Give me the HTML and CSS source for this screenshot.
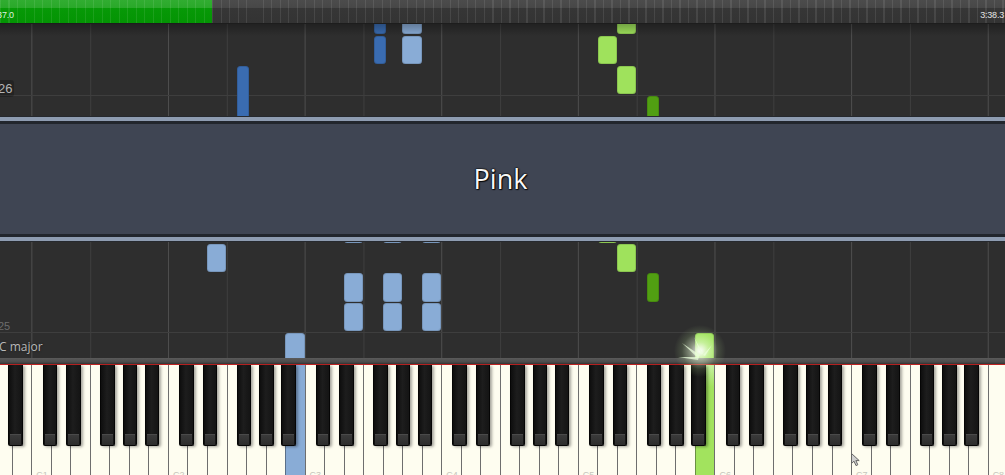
FILE: index.html
```html
<!DOCTYPE html>
<html>
<head>
<meta charset="utf-8">
<title>Pink</title>
<link rel="stylesheet" href="styles.css">
</head>
<body>
<div class="topbar">
  <div class="progress"><span class="time time-left">3:37.0</span></div>
  <div class="rest"><span class="time time-right">3:38.3</span></div>
</div>

<div class="roll">
  <div class="mline m1"></div>
  <div class="mline m2"></div>
  <span class="mlabel l26">26</span>
  <span class="mlabel l25">25</span>
  <span class="keylabel">C major</span>

  <div class="n dkb" style="left:237.4px;top:42px;height:60px"></div>
  <div class="n dkb" style="left:374px;top:-12px;height:21.5px"></div>
  <div class="n dkb" style="left:374px;top:12px;height:28px"></div>
  <div class="n ltb" style="left:402.3px;top:-12px;height:21.5px"></div>
  <div class="n ltb" style="left:402.3px;top:12px;height:28px"></div>
  <div class="n grn" style="left:617px;top:-12px;height:21.5px"></div>
  <div class="n grn" style="left:597.5px;top:12px;height:28px"></div>
  <div class="n grn" style="left:617px;top:42px;height:28px"></div>
  <div class="n dkg" style="left:647.2px;top:72px;height:40px"></div>

  <div class="n ltb" style="left:207px;top:220px;height:28.3px"></div>
  <div class="n ltb" style="left:343.7px;top:160px;height:58.7px"></div>
  <div class="n ltb" style="left:382.7px;top:160px;height:58.7px"></div>
  <div class="n ltb" style="left:421.8px;top:160px;height:58.7px"></div>
  <div class="n grn" style="left:597.5px;top:160px;height:58.7px"></div>
  <div class="n ltb" style="left:343.7px;top:249.3px;height:28.4px"></div>
  <div class="n ltb" style="left:343.7px;top:278.7px;height:28.3px"></div>
  <div class="n ltb" style="left:382.7px;top:249.3px;height:28.4px"></div>
  <div class="n ltb" style="left:382.7px;top:278.7px;height:28.3px"></div>
  <div class="n ltb" style="left:421.8px;top:249.3px;height:28.4px"></div>
  <div class="n ltb" style="left:421.8px;top:278.7px;height:28.3px"></div>
  <div class="n grn" style="left:617px;top:220px;height:28.3px"></div>
  <div class="n dkg" style="left:647.2px;top:249.3px;height:28.4px"></div>
  <div class="n grn" style="left:695px;top:308.7px;height:40px"></div>
  <div class="n ltb" style="left:285.3px;top:309px;height:40px"></div>

  <div class="banner"><span>Pink</span></div>
</div>

<div class="kbtop"></div>

<div class="keyboard">
  <div class="w a"></div>
  <div class="w"></div>
  <div class="w c"><span class="lbl">C1</span></div>
  <div class="w d"></div>
  <div class="w"></div>
  <div class="w f"></div>
  <div class="w g"></div>
  <div class="w a"></div>
  <div class="w"></div>
  <div class="w c"><span class="lbl">C2</span></div>
  <div class="w d"></div>
  <div class="w"></div>
  <div class="w f"></div>
  <div class="w g"></div>
  <div class="w a"></div>
  <div class="w hb"></div>
  <div class="w c"><span class="lbl">C3</span></div>
  <div class="w d"></div>
  <div class="w"></div>
  <div class="w f"></div>
  <div class="w g"></div>
  <div class="w a"></div>
  <div class="w"></div>
  <div class="w c"><span class="lbl">C4</span></div>
  <div class="w d"></div>
  <div class="w"></div>
  <div class="w f"></div>
  <div class="w g"></div>
  <div class="w a"></div>
  <div class="w"></div>
  <div class="w c"><span class="lbl">C5</span></div>
  <div class="w d"></div>
  <div class="w"></div>
  <div class="w f"></div>
  <div class="w g"></div>
  <div class="w a"></div>
  <div class="w hg"></div>
  <div class="w c"><span class="lbl">C6</span></div>
  <div class="w d"></div>
  <div class="w"></div>
  <div class="w f"></div>
  <div class="w g"></div>
  <div class="w a"></div>
  <div class="w"></div>
  <div class="w c"><span class="lbl">C7</span></div>
  <div class="w d"></div>
  <div class="w"></div>
  <div class="w f"></div>
  <div class="w g"></div>
  <div class="w a"></div>
  <div class="w"></div>
  <div class="w"><span class="lbl">C8</span></div>
</div>

<div class="glow"></div>
<svg class="sparks" width="40" height="30" viewBox="0 0 40 30">
  <path d="M26 22 L8 10 L24 25 Z M25 24 L4 24 L24 27 Z M27 21 L20 4 L29 21 Z M29 22 L38 12 L31 23 Z" fill="rgba(235,255,220,0.75)"/>
</svg>
<svg class="cursor" width="10" height="14" viewBox="0 0 10 14"><path d="M0.5 0.5 L0.5 10.5 L3 8.2 L5 12.6 L6.8 11.8 L4.9 7.6 L8.2 7.6 Z" fill="#d0d0d0" stroke="#666" stroke-width="1"/></svg>
</body>
</html>
```

FILE: styles.css
```css
* { box-sizing: border-box; }
html, body { margin: 0; padding: 0; }
body {
  position: relative;
  width: 1005px;
  height: 475px;
  overflow: hidden;
  background: #2e2e2e;
  font-family: "Open Sans", "Liberation Sans", sans-serif;
}

/* ---------- top progress bar ---------- */
.topbar {
  display: flex;
  height: 24px;
  border-bottom: 1px solid #1d1d1d;
}
.progress {
  width: 212px;
  display: flex;
  align-items: flex-end;
  padding-bottom: 2px;
  overflow: hidden;
  background:
    repeating-linear-gradient(90deg, rgba(255,255,255,0.09) 0 1px, transparent 1px 8.5px),
    linear-gradient(#31ad31 0, #2aa82a 8px, #079907 8px, #049404 100%);
}
.rest {
  flex: 1;
  display: flex;
  justify-content: flex-end;
  align-items: flex-end;
  padding: 0 1px 2px 0;
  background:
    repeating-linear-gradient(90deg, rgba(255,255,255,0.09) 0 1px, transparent 1px 8.5px),
    linear-gradient(#4c4c4c 0, #474747 8px, #363636 8px, #333 100%);
}
.time {
  font-family: "Liberation Sans", "DejaVu Sans", sans-serif;
  font-size: 9px;
  line-height: 11px;
  letter-spacing: -0.2px;
  color: #e4e4e4;
  white-space: nowrap;
}
.time-left { margin-left: -10px; color: #dff0df; }

/* ---------- note roll ---------- */
.roll {
  position: relative;
  height: 334px;
  overflow: hidden;
  background:
    linear-gradient(90deg, #4e4e4e 0 1px, transparent 1px 58.56px, #3e3e3e 58.56px 59.56px, transparent 59.56px) 31.36px 0 / 136.64px 100% repeat-x,
    #2e2e2e;
}
.roll::before {
  content: "";
  position: absolute;
  left: 0; right: 0; top: 0;
  height: 12px;
  background: linear-gradient(rgba(0,0,0,0.28), rgba(0,0,0,0));
  z-index: 3;
}
.mline {
  position: absolute;
  left: 0; right: 0;
  height: 1px;
  background: #3e3e3e;
}
.m1 { top: 71px; }
.m2 { top: 308px; }

.mlabel {
  position: absolute;
  font-family: "Liberation Sans", sans-serif;
  border-radius: 3px;
}
.l26 {
  left: -4px; top: 55.5px;
  font-size: 13px; line-height: 17px;
  padding: 0 2px;
  color: #b4b4b4;
  background: rgba(0,0,0,0.22);
}
.l25 {
  left: -2px; top: 295px;
  font-size: 11px; line-height: 14px;
  color: #6c6c6c;
}
.keylabel {
  position: absolute;
  left: -1px; top: 314.5px;
  font-size: 12px; line-height: 16px;
  color: #b9b9b9;
  text-shadow: 0 0 2px #1a1a1a;
}

.n {
  position: absolute;
  width: 19.3px;
  border-radius: 3.5px;
  box-shadow: inset 0 0 0 1px rgba(0,0,0,0.12);
}
.ltb { background: #89acd6; }
.dkb { background: #3a6cb1; width: 11.7px; }
.grn { background: #9fe25c; }
.dkg { background: #519f12; width: 11.7px; }

.banner {
  position: absolute;
  left: 0; right: 0;
  top: 93px;
  height: 124px;
  z-index: 4;
  display: flex;
  align-items: center;
  justify-content: center;
  background: #3f4553;
  border-top: 4px solid #8e9cb1;
  border-bottom: 4px solid #8e9cb1;
  box-shadow: inset 0 3px 0 #22262d, inset 0 -3px 0 #22262d, 0 -1px 0 #26292e, 0 1px 0 #26292e;
}
.banner span {
  margin-left: -4px;
  margin-top: -2px;
  font-size: 27px;
  color: #f8f8f8;
  text-shadow: 0 0 2px #000, 0 0 1px #000, 0 0 1px #000, 1px 1px 1px rgba(0,0,0,0.8);
}

/* ---------- keyboard ---------- */
.kbtop {
  height: 7px;
  background: linear-gradient(#5a5a5a 0, #4b4b4b 4px, #333 6px);
  border-bottom: 1px solid #bd2222;
}
.keyboard {
  display: flex;
  height: 110px;
  margin-left: -7.68px;
}
.w {
  position: relative;
  flex: 0 0 19.52px;
  height: 110px;
  background: #fefdf0;
  box-shadow: inset 1px 0 0 #6e6e6e;
}
.w.hb { background: #89acd6; box-shadow: inset 1px 0 0 #5a6f88; }
.w.hg { background: linear-gradient(#c6f0a0 0, #a2e35e 22px); box-shadow: inset 1px 0 0 #6a8f44; }

.w.a::after, .w.c::after, .w.d::after, .w.f::after, .w.g::after {
  content: "";
  position: absolute;
  top: 0;
  width: 12.5px;
  height: 80px;
  z-index: 2;
  background:
    linear-gradient(#4a4a4a 0 1px, #3a3a3a 1px, #2c2c2c) 50% 100% / calc(100% - 2px) 11px no-repeat,
    linear-gradient(90deg, #0e0e0e, #1d1d1d 45%, #141414);
  border: 1px solid #050505;
  border-top: 0;
  border-radius: 0 0 2px 2px;
  box-shadow: 2px 1px 3px rgba(0,0,0,0.35);
}
.w.c::after { left: 11.27px; }
.w.d::after { left: 15.27px; }
.w.f::after { left: 10.27px; }
.w.g::after { left: 13.27px; }
.w.a::after { left: 15.77px; }

.lbl {
  position: absolute;
  left: 5px;
  top: 105px;
  font-family: "Liberation Sans", sans-serif;
  font-size: 9px;
  line-height: 11px;
  color: #c6c6bc;
}

/* ---------- overlays ---------- */
.glow {
  position: absolute;
  left: 674px;
  top: 325px;
  width: 52px;
  height: 52px;
  border-radius: 50%;
  z-index: 10;
  background: radial-gradient(circle, rgba(255,255,255,0.95) 0, rgba(255,255,255,0.8) 3px, rgba(236,255,216,0.5) 9px, rgba(205,255,165,0.14) 18px, rgba(205,255,165,0) 26px);
}
.sparks {
  position: absolute;
  left: 674px;
  top: 333px;
  z-index: 11;
}
.cursor {
  position: absolute;
  left: 851px;
  top: 453px;
  z-index: 10;
}
```
